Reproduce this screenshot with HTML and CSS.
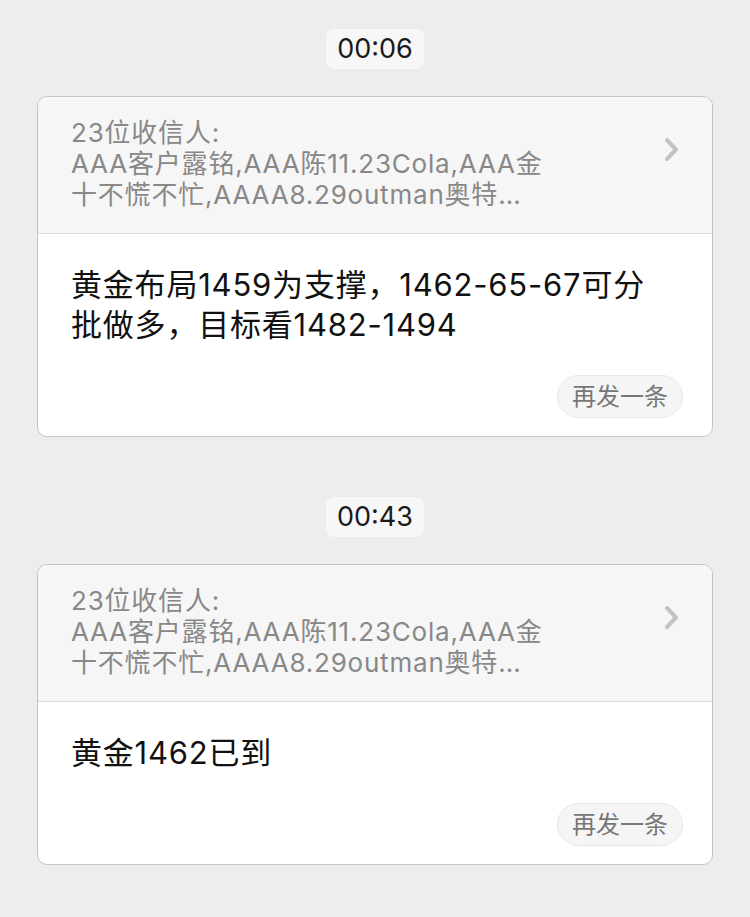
FILE: index.html
```html
<!DOCTYPE html>
<html lang="zh-CN">
<head>
  <meta charset="UTF-8">
  <meta name="viewport" content="width=device-width, initial-scale=1.0">
  <title>群发消息</title>
  <link rel="stylesheet" href="styles.css">
</head>
<body>
  <div class="thread">

    <!-- first message -->
    <div class="group">
      <div class="time-row"><span class="time">00:06</span></div>
      <div class="card">
        <div class="card-head">
          <div class="receivers">
            <div class="line">23位收信人:</div>
            <div class="line">AAA客户露铭,AAA陈11.23Cola,AAA金</div>
            <div class="line">十不慌不忙,AAAA8.29outman奥特…</div>
          </div>
          <svg class="chevron" width="15" height="25" viewBox="0 0 15 25">
            <polyline points="3,3 12,12.5 3,22" fill="none" stroke="#c2c2c2" stroke-width="4" stroke-linecap="round" stroke-linejoin="round"/>
          </svg>
        </div>
        <div class="card-body">
          <p class="msg">黄金布局1459为支撑，1462-65-67可分<br>批做多，目标看1482-1494</p>
          <div class="actions"><button class="resend">再发一条</button></div>
        </div>
      </div>
    </div>

    <!-- second message -->
    <div class="group">
      <div class="time-row"><span class="time">00:43</span></div>
      <div class="card">
        <div class="card-head">
          <div class="receivers">
            <div class="line">23位收信人:</div>
            <div class="line">AAA客户露铭,AAA陈11.23Cola,AAA金</div>
            <div class="line">十不慌不忙,AAAA8.29outman奥特…</div>
          </div>
          <svg class="chevron" width="15" height="25" viewBox="0 0 15 25">
            <polyline points="3,3 12,12.5 3,22" fill="none" stroke="#c2c2c2" stroke-width="4" stroke-linecap="round" stroke-linejoin="round"/>
          </svg>
        </div>
        <div class="card-body">
          <p class="msg">黄金1462已到</p>
          <div class="actions"><button class="resend">再发一条</button></div>
        </div>
      </div>
    </div>

  </div>
</body>
</html>
```

FILE: styles.css
```css
* {
    margin: 0;
    padding: 0;
    box-sizing: border-box;
}

body {
    background-color: #ededed;
    font-family: Inter, "Noto Sans CJK SC", sans-serif;
    color: #111;
}

.thread {
    padding: 29px 37px 0;
}

.group + .group {
    margin-top: 60px;
}

/* Timestamp pill */
.time-row {
    display: flex;
    justify-content: center;
    margin-bottom: 27px;
}

.time {
    display: block;
    height: 40px;
    line-height: 40px;
    padding: 0 11px;
    font-size: 27px;
    color: #1a1a1a;
    background-color: #f7f7f7;
    border-radius: 8px;
}

/* Message card */
.card {
    background-color: #fff;
    border: 1px solid #c4c4c4;
    border-radius: 10px;
    overflow: hidden;
}

.card-head {
    display: flex;
    justify-content: space-between;
    align-items: flex-start;
    padding: 20px 33px 23px 33px;
    background-color: #f6f6f6;
    border-bottom: 1px solid #d9d9d9;
}

.receivers {
    font-size: 26px;
    line-height: 31px;
    letter-spacing: 0.8px;
    color: #888;
}

.receivers .line {
    white-space: nowrap;
}

.chevron {
    margin-top: 20px;
    flex-shrink: 0;
}

.card-body {
    padding: 31px 29px 18px 33px;
}

.msg {
    font-size: 31px;
    line-height: 40px;
    letter-spacing: 0.8px;
    color: #111;
}

.actions {
    display: flex;
    justify-content: flex-end;
    margin-top: 30px;
}

.resend {
    height: 43px;
    line-height: 41px;
    padding: 0 14px;
    font-family: inherit;
    font-size: 24px;
    color: #777;
    background-color: #f5f5f5;
    border: 1px solid #e8e8e8;
    border-radius: 22px;
    cursor: pointer;
}
```
